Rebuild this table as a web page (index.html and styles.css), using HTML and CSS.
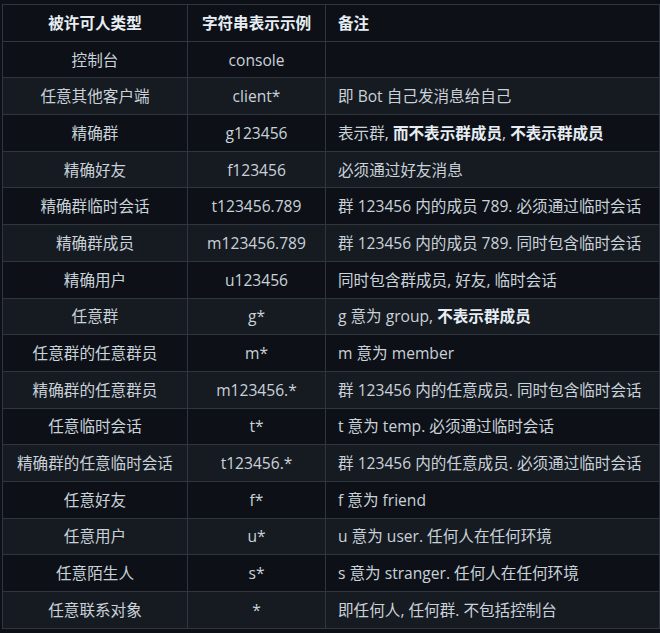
FILE: index.html
```html
<!DOCTYPE html>
<html lang="zh-CN">
<head>
<meta charset="utf-8">
<title>被许可人类型</title>
<link rel="stylesheet" href="styles.css">
</head>
<body>
<table class="perm-table">
  <colgroup>
    <col class="c1"><col class="c2"><col class="c3">
  </colgroup>
  <thead>
    <tr><th class="center">被许可人类型</th><th class="center">字符串表示示例</th><th class="left">备注</th></tr>
  </thead>
  <tbody>
    <tr><td class="center">控制台</td><td class="center">console</td><td></td></tr>
    <tr><td class="center">任意其他客户端</td><td class="center">client*</td><td>即 Bot 自己发消息给自己</td></tr>
    <tr><td class="center">精确群</td><td class="center">g123456</td><td>表示群, <strong>而不表示群成员</strong>, <strong>不表示群成员</strong></td></tr>
    <tr><td class="center">精确好友</td><td class="center">f123456</td><td>必须通过好友消息</td></tr>
    <tr><td class="center">精确群临时会话</td><td class="center">t123456.789</td><td>群 123456 内的成员 789. 必须通过临时会话</td></tr>
    <tr><td class="center">精确群成员</td><td class="center">m123456.789</td><td>群 123456 内的成员 789. 同时包含临时会话</td></tr>
    <tr><td class="center">精确用户</td><td class="center">u123456</td><td>同时包含群成员, 好友, 临时会话</td></tr>
    <tr><td class="center">任意群</td><td class="center">g*</td><td>g 意为 group, <strong>不表示群成员</strong></td></tr>
    <tr><td class="center">任意群的任意群员</td><td class="center">m*</td><td>m 意为 member</td></tr>
    <tr><td class="center">精确群的任意群员</td><td class="center">m123456.*</td><td>群 123456 内的任意成员. 同时包含临时会话</td></tr>
    <tr><td class="center">任意临时会话</td><td class="center">t*</td><td>t 意为 temp. 必须通过临时会话</td></tr>
    <tr><td class="center">精确群的任意临时会话</td><td class="center">t123456.*</td><td>群 123456 内的任意成员. 必须通过临时会话</td></tr>
    <tr><td class="center">任意好友</td><td class="center">f*</td><td>f 意为 friend</td></tr>
    <tr><td class="center">任意用户</td><td class="center">u*</td><td>u 意为 user. 任何人在任何环境</td></tr>
    <tr><td class="center">任意陌生人</td><td class="center">s*</td><td>s 意为 stranger. 任何人在任何环境</td></tr>
    <tr><td class="center">任意联系对象</td><td class="center">*</td><td>即任何人, 任何群. 不包括控制台</td></tr>
  </tbody>
</table>
</body>
</html>
```
FILE: styles.css
```css
html, body {
  margin: 0;
  padding: 0;
  background: #0d1117;
}
body {
  padding: 4px 0 0 2px;
  font-family: "Open Sans", "Noto Sans CJK SC", sans-serif;
  font-size: 15.6px;
  color: #c9d1d9;
}
.perm-table {
  border-collapse: collapse;
  table-layout: fixed;
  width: 657px;
}
.c1 { width: 185px; }
.c2 { width: 138px; }
.c3 { width: 334px; }
.perm-table th,
.perm-table td {
  border: 1px solid #30363d;
  height: 36.7px;
  padding: 0 12px;
  box-sizing: border-box;
  white-space: nowrap;
  line-height: 20px;
}
.perm-table th {
  font-weight: 700;
  color: #e6edf3;
}
.perm-table tbody tr:nth-child(2n) {
  background: #161b22;
}
.center { text-align: center; }
.left { text-align: left; }
.perm-table td strong {
  font-weight: 700;
  color: #e6edf3;
}
.perm-table th.center, .perm-table td.center { padding: 0 4px; }
```
